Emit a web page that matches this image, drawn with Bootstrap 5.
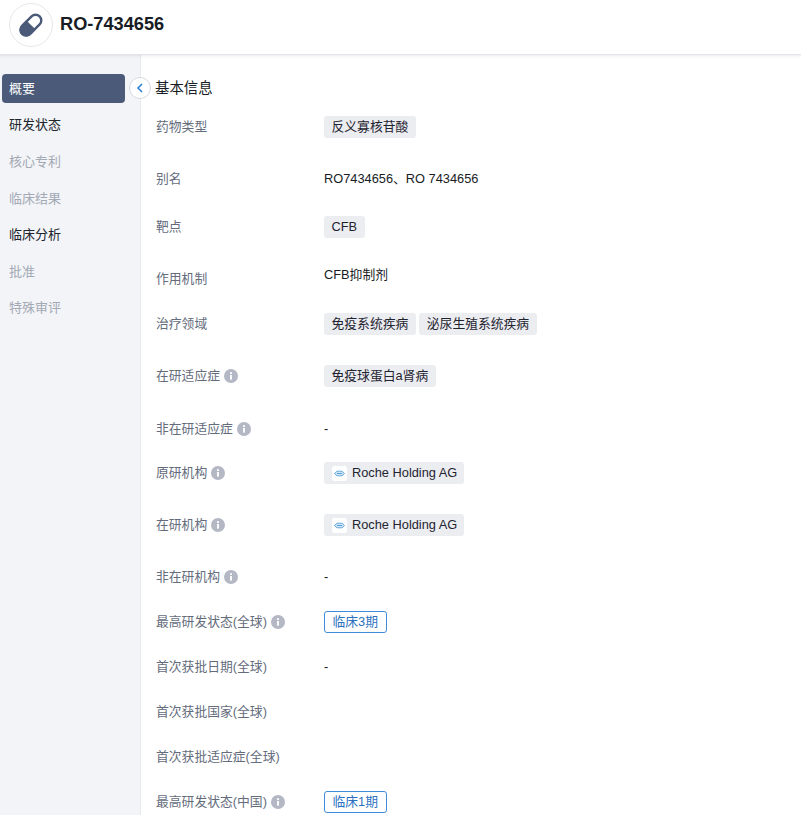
<!DOCTYPE html>
<html lang="zh">
<head>
<meta charset="utf-8">
<title>RO-7434656</title>
<link href="https://cdn.jsdelivr.net/npm/bootstrap@5.3.0/dist/css/bootstrap.min.css" rel="stylesheet">
<style>
html,body{height:815px;overflow:hidden}
body{background:#fff;font-family:"Liberation Sans","Noto Sans CJK SC",sans-serif;font-size:12.8px;color:#181c24}
.top-bar{height:55px;padding:0 0 4px 9px;gap:7px;border-bottom:1px solid #e4e5e8;box-shadow:0 1px 3px rgba(30,40,60,.1);position:relative;z-index:2}
.logo-ring{width:44px;height:44px;border:1px solid #e6e8ec;border-radius:50%}
.drug-title{font-size:18.2px;font-weight:700;color:#181c24}
.page-body{height:760px}
.side-nav{width:141px;background:#f3f4f7;border-right:1px solid #e8e9ec;padding:19px 15px 0 1.500px;flex:none;position:relative;font-size:13px}
.side-item{height:29px;margin-bottom:7.6px;padding-left:7.5px;border-radius:4px;color:#a3a9b5}
.side-item.on{background:#4a5a78;color:#fff}
.side-item.dark{color:#20242c}
.collapse-dot{position:absolute;left:129px;top:22px;width:22px;height:22px;border-radius:50%;background:#fff;border:1px solid #d5d9e2}
.main-pane{padding:22px 0 0 15px;min-width:0}
.sec-title{font-size:14.4px;color:#181c24;height:22px;line-height:22px;margin-left:-1px}
.info-row{height:24px;line-height:24px}
.m-1st{margin-top:16px}
.m-44{margin-top:20px}.m-45{margin-top:21px}.m-48{margin-top:24px}.m-52{margin-top:28px}.m-53{margin-top:29px}
.info-key{width:168px;color:#646c7c;flex:none}
.info-val{display:flex;align-items:center}
.val-up{margin-top:-8px}
.info-tip{width:14px;height:14px;margin-left:4px;flex:none}
.chip{background:#ebedf0;border-radius:3px;padding:0 7.5px;height:22px;line-height:22px;color:#1f2430;margin-right:3.5px}
.chip.org{padding:0 7px 0 8px}
.org-mark{width:15px;height:15px;background:#fff;border-radius:3px;margin-right:5px}
.phase-tag{border:1px solid #3f8bdc;border-radius:3px;color:#2a6fc0;height:22px;line-height:20px;padding:0 7.500px;background:#fff}
</style>
</head>
<body>
<header class="top-bar d-flex align-items-center">
  <div class="logo-ring d-flex align-items-center justify-content-center">
    <svg width="24" height="24" viewBox="0 0 24 24"><g transform="rotate(-45 12 12)"><rect x="-0.200" y="6.300" width="24.400" height="11.400" rx="5.700" fill="#fff" stroke="#4a5a78" stroke-width="2.400"/><path d="M5 5.200h7v13.600H5a6.800 6.800 0 0 1 0-13.600z" fill="#4a5a78"/></g></svg>
  </div>
  <div class="drug-title">RO-7434656</div>
</header>
<div class="page-body d-flex">
  <nav class="side-nav">
    <div class="side-item on d-flex align-items-center">概要</div>
    <div class="side-item dark d-flex align-items-center">研发状态</div>
    <div class="side-item d-flex align-items-center">核心专利</div>
    <div class="side-item d-flex align-items-center">临床结果</div>
    <div class="side-item dark d-flex align-items-center">临床分析</div>
    <div class="side-item d-flex align-items-center">批准</div>
    <div class="side-item d-flex align-items-center">特殊审评</div>
    <div class="collapse-dot d-flex align-items-center justify-content-center">
      <svg width="8" height="10" viewBox="0 0 8 10"><path d="M6 1 2 5l4 4" fill="none" stroke="#2f7fd6" stroke-width="1.6"/></svg>
    </div>
  </nav>
  <main class="main-pane flex-grow-1">
    <div class="sec-title">基本信息</div>
    <svg width="0" height="0" class="position-absolute"><defs><symbol id="tip" viewBox="0 0 15 15"><circle cx="7.5" cy="7.5" r="7.5" fill="#b3b8c4"/><rect x="6.5" y="6.4" width="2" height="5" fill="#fff"/><rect x="6.5" y="3.4" width="2" height="2" fill="#fff"/></symbol>
    <symbol id="roche" viewBox="0 0 15 15"><rect width="15" height="15" rx="3" fill="#fff"/><path d="M2.5 7.5 5 5.200h5l2.500 2.300L10 9.800H5z" fill="#cfe5f6" stroke="#5aa3d8" stroke-width=".9"/><rect x="5" y="7" width="5" height="1" fill="#5aa3d8"/></symbol></defs></svg>

    <div class="info-row d-flex align-items-center m-1st"><div class="info-key">药物类型</div><div class="info-val"><span class="chip">反义寡核苷酸</span></div></div>
    <div class="info-row d-flex align-items-center m-52"><div class="info-key">别名</div><div class="info-val">RO7434656、RO 7434656</div></div>
    <div class="info-row d-flex align-items-center m-48"><div class="info-key">靶点</div><div class="info-val"><span class="chip">CFB</span></div></div>
    <div class="info-row d-flex align-items-center m-52"><div class="info-key">作用机制</div><div class="info-val val-up">CFB抑制剂</div></div>
    <div class="info-row d-flex align-items-center m-45"><div class="info-key">治疗领域</div><div class="info-val"><span class="chip">免疫系统疾病</span><span class="chip">泌尿生殖系统疾病</span></div></div>
    <div class="info-row d-flex align-items-center m-52"><div class="info-key d-flex align-items-center">在研适应症<svg class="info-tip"><use href="#tip"/></svg></div><div class="info-val"><span class="chip">免疫球蛋白a肾病</span></div></div>
    <div class="info-row d-flex align-items-center m-53"><div class="info-key d-flex align-items-center">非在研适应症<svg class="info-tip"><use href="#tip"/></svg></div><div class="info-val">-</div></div>
    <div class="info-row d-flex align-items-center m-44"><div class="info-key d-flex align-items-center">原研机构<svg class="info-tip"><use href="#tip"/></svg></div><div class="info-val"><span class="chip org d-flex align-items-center"><svg class="org-mark"><use href="#roche"/></svg>Roche Holding AG</span></div></div>
    <div class="info-row d-flex align-items-center m-52"><div class="info-key d-flex align-items-center">在研机构<svg class="info-tip"><use href="#tip"/></svg></div><div class="info-val"><span class="chip org d-flex align-items-center"><svg class="org-mark"><use href="#roche"/></svg>Roche Holding AG</span></div></div>
    <div class="info-row d-flex align-items-center m-52"><div class="info-key d-flex align-items-center">非在研机构<svg class="info-tip"><use href="#tip"/></svg></div><div class="info-val">-</div></div>
    <div class="info-row d-flex align-items-center m-45"><div class="info-key d-flex align-items-center">最高研发状态(全球)<svg class="info-tip"><use href="#tip"/></svg></div><div class="info-val"><span class="phase-tag">临床3期</span></div></div>
    <div class="info-row d-flex align-items-center m-45"><div class="info-key">首次获批日期(全球)</div><div class="info-val">-</div></div>
    <div class="info-row d-flex align-items-center m-45"><div class="info-key">首次获批国家(全球)</div></div>
    <div class="info-row d-flex align-items-center m-45"><div class="info-key">首次获批适应症(全球)</div></div>
    <div class="info-row d-flex align-items-center m-45"><div class="info-key d-flex align-items-center">最高研发状态(中国)<svg class="info-tip"><use href="#tip"/></svg></div><div class="info-val"><span class="phase-tag">临床1期</span></div></div>
  </main>
</div>
<script src="https://cdn.jsdelivr.net/npm/bootstrap@5.3.0/dist/js/bootstrap.bundle.min.js"></script>
</body>
</html>
